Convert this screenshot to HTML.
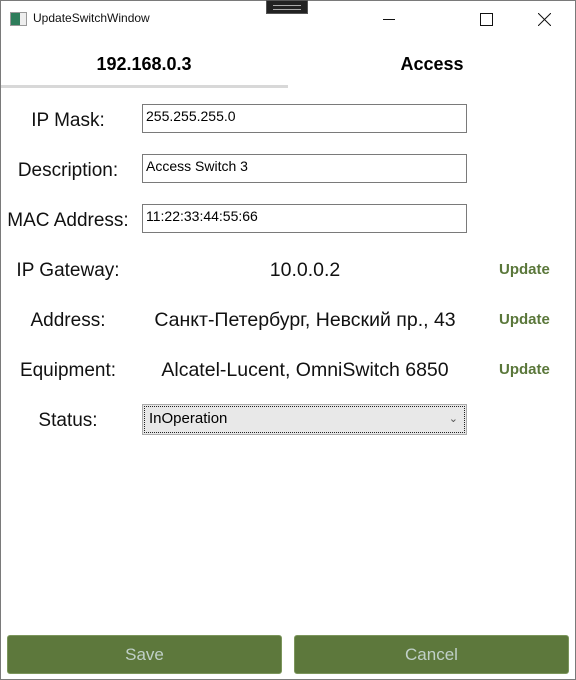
<!DOCTYPE html>
<html><head><style>
body{margin:0;width:576px;height:680px;overflow:hidden;background:#fff;font-family:"Liberation Sans",sans-serif;position:relative}
.win{position:absolute;left:0;top:0;width:574px;height:678px;border:1px solid #7a7a7a}
.a{position:absolute}
.lbl{position:absolute;font-size:19px;color:#111;width:136px;text-align:center;left:0}
.tb{position:absolute;left:142px;width:320px;height:27px;border:1px solid #7a7a7a;font-size:14px;line-height:22px;padding-left:3px;box-sizing:content-box}
.val{position:absolute;font-size:19.5px;color:#111;left:136px;width:338px;text-align:center}
.upd{position:absolute;left:499px;font-size:15px;font-weight:bold;color:#5a773a}
.btn{position:absolute;top:635px;height:37px;background:#5d783c;border:1px solid #7c965c;border-radius:3px;color:#c0d0c8;font-size:17px;text-align:center;line-height:37px}
</style></head><body>
<div class="win"></div>
<div class="a" style="left:266px;top:0;width:42px;height:14px;background:#222;border:1px solid #555;box-sizing:border-box"><div style="margin:4px 6px;height:3px;border-top:1px solid #aaa;border-bottom:1px solid #aaa"></div></div>
<div class="a" style="left:10px;top:12px;width:15px;height:12px;border:1px solid #999;background:linear-gradient(90deg,#2e7d5b 0 60%,#eee 60%)"></div>
<div class="a" style="left:33px;top:11px;font-size:12px;color:#111">UpdateSwitchWindow</div>
<div class="a" style="left:383px;top:19px;width:12px;border-top:1px solid #111"></div>
<div class="a" style="left:480px;top:13px;width:11px;height:11px;border:1px solid #111"></div>
<svg class="a" style="left:538px;top:13px" width="13" height="13"><path d="M0 0L13 13M13 0L0 13" stroke="#111" stroke-width="1"/></svg>
<div class="a" style="left:0;top:54px;width:288px;text-align:center;font-size:18px;font-weight:bold">192.168.0.3</div>
<div class="a" style="left:288px;top:54px;width:288px;text-align:center;font-size:18px;font-weight:bold">Access</div>
<div class="a" style="left:1px;top:85px;width:287px;height:3px;background:#d8d8d8"></div>

<div class="lbl" style="top:110px">IP Mask:</div>
<div class="tb" style="top:104px">255.255.255.0</div>
<div class="lbl" style="top:160px">Description:</div>
<div class="tb" style="top:154px">Access Switch 3</div>
<div class="lbl" style="top:210px">MAC Address:</div>
<div class="tb" style="top:204px">11:22:33:44:55:66</div>

<div class="lbl" style="top:260px">IP Gateway:</div>
<div class="val" style="top:259px">10.0.0.2</div><div class="upd" style="top:261px">Update</div>
<div class="lbl" style="top:310px">Address:</div>
<div class="val" style="top:309px">Санкт-Петербург, Невский пр., 43</div><div class="upd" style="top:311px">Update</div>
<div class="lbl" style="top:360px">Equipment:</div>
<div class="val" style="top:359px">Alcatel-Lucent, OmniSwitch 6850</div><div class="upd" style="top:361px">Update</div>
<div class="lbl" style="top:410px">Status:</div>
<div class="a" style="left:142px;top:404px;width:323px;height:29px;border:1px solid #acacac;background:#e8e8e8;box-sizing:content-box">
<div style="position:absolute;left:1px;top:1px;right:1px;bottom:1px;border:1px dotted #222;font-size:15px;line-height:24px;padding-left:4px">InOperation<span style="position:absolute;right:6px;top:0;font-size:11px;color:#555">&#8964;</span></div></div>

<div class="btn" style="left:7px;width:273px">Save</div>
<div class="btn" style="left:294px;width:273px">Cancel</div>
</body></html>
